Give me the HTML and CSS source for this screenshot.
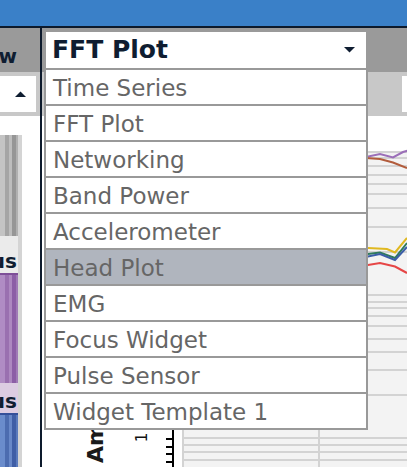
FILE: index.html
```html
<!DOCTYPE html>
<html>
<head>
<meta charset="utf-8">
<link rel="stylesheet" href="styles.css">
</head>
<body>
<div class="topbar"></div>
<div class="topline"></div>
<div class="main">
  <div class="leftcol">
    <div class="lhead"><span>Overview</span></div>
    <div class="lsub">
      <div class="lbox">
        <svg class="arrow" width="11" height="6" viewBox="0 0 11 6"><polygon points="0,6 5.5,0.5 11,6"/></svg>
      </div>
    </div>
    <div class="lbody">
      <div class="bars">
        <div class="seg seg-grey"></div>
        <div class="seglabel lab-grey"><span>Focus</span></div>
        <div class="seg seg-purple"></div>
        <div class="seglabel lab-purple"><span>Focus</span></div>
        <div class="seg seg-blue"></div>
      </div>
    </div>
  </div>
  <div class="divider"></div>
  <div class="widget">
    <div class="whead"></div>
    <div class="wsub"><div class="wbox"></div></div>
    <div class="wbody">
      <svg class="plot" width="365" height="351" viewBox="0 0 365 351">
        <rect x="140" y="35" width="225" height="316" fill="#f3f3f3"/>
        <path d="M140 36H365M140 42H365M140 50H365M140 59H365M140 68H365M140 78H365M140 92H365M140 111H365M140 136H365M140 179H365M140 186H365M140 192H365M140 200H365M140 210H365M140 223H365M140 236H365M140 254H365M140 279H365M140 322H365M140 329H365M140 336H365M140 344H365" stroke="#d3d3d3" stroke-width="2" fill="none"/>
        <path d="M141 35V351M277 35V351" stroke="#d3d3d3" stroke-width="2" fill="none"/>
        <path d="M131 35V351" stroke="#000" stroke-width="2" fill="none"/>
        <path d="M124 323H131M124 331H131M124 338H131M124 346H131" stroke="#000" stroke-width="2" fill="none"/>
        <text class="tick" x="105" y="321.5" transform="rotate(-90 105 321.5)" text-anchor="middle">1</text>
        <text class="axlabel" x="61" y="347" transform="rotate(-90 61 347)">Amplitude (uV)</text>
        <polyline points="318,41 324,41 338,38 351,41.5 361,36 368,34" stroke="#9b6fb8" stroke-width="2" fill="none"/>
        <polyline points="318,42 324,42 338,43 351,46.5 365,52" stroke="#b25c3c" stroke-width="2" fill="none"/>
        <polyline points="318,132 326,132 345,133 353,136.5 365,122" stroke="#e0b820" stroke-width="2" fill="none"/>
        <polyline points="318,138 326,138 338,136.5 353,142 365,127" stroke="#2f7a5c" stroke-width="2" fill="none"/>
        <polyline points="318,140.5 326,140.5 338,138 353,144 365,131" stroke="#3c5ea8" stroke-width="2" fill="none"/>
        <polyline points="318,149 326,149 338,147 353,150.5 365,157" stroke="#e64646" stroke-width="2" fill="none"/>
      </svg>
    </div>
    <div class="dropdown">
      <div class="ddhead">
        <span>FFT Plot</span>
        <svg class="arrow" width="11" height="6" viewBox="0 0 11 6"><polygon points="0,0 11,0 5.5,5.5"/></svg>
      </div>
      <ul class="ddlist">
        <li>Time Series</li>
        <li>FFT Plot</li>
        <li>Networking</li>
        <li>Band Power</li>
        <li>Accelerometer</li>
        <li class="sel">Head Plot</li>
        <li>EMG</li>
        <li>Focus Widget</li>
        <li>Pulse Sensor</li>
        <li>Widget Template 1</li>
      </ul>
    </div>
  </div>
</div>
</body>
</html>
```

FILE: styles.css
```css
html, body {
  margin: 0;
  padding: 0;
}
body {
  width: 407px;
  height: 467px;
  overflow: hidden;
  background: #fff;
  font-family: "DejaVu Sans", "Noto Sans", sans-serif;
}
.topbar {
  height: 26px;
  background: #3a80c8;
}
.topline {
  height: 2px;
  background: #0d1a2c;
}
.main {
  display: flex;
  height: 439px;
}

/* left widget */
.leftcol {
  width: 40px;
  display: flex;
  flex-direction: column;
  flex-shrink: 0;
}
.lhead {
  height: 44px;
  box-sizing: border-box;
  background: #9a9a9a;
  display: flex;
  justify-content: flex-end;
  align-items: flex-start;
  padding: 18px 23px 0 0;
  font-weight: bold;
  font-size: 20px;
  line-height: 20px;
  color: #0f1d31;
  white-space: nowrap;
}
.lhead span,
.seglabel span {
  flex-shrink: 0;
}
.lsub {
  height: 44px;
  box-sizing: border-box;
  background: #c8c8c8;
  padding: 4px 4px 4px 0;
}
.lbox {
  height: 36px;
  background: #fff;
  display: flex;
  justify-content: flex-end;
  align-items: center;
  padding-right: 10px;
}
.arrow {
  display: block;
  fill: #0f1d31;
}
.lbody {
  flex: 1;
  background: #fff;
  padding-top: 19px;
}
.bars {
  width: 18px;
  height: 100%;
  border-right: 4px solid #d4d4d4;
  display: flex;
  flex-direction: column;
}
.seg-grey {
  height: 101px;
  background: linear-gradient(90deg, #c4c4c4 0 5px, #a5a5a5 5px 9px, #bdbdbd 9px 12px, #969696 12px 16px, #b0b0b0 16px 18px);
}
.seglabel {
  display: flex;
  justify-content: flex-end;
  align-items: flex-end;
  padding: 0 1px 2px 0;
  box-sizing: border-box;
  font-weight: bold;
  font-size: 20px;
  line-height: 20px;
  color: #0f1d31;
  white-space: nowrap;
}
.lab-grey {
  height: 37px;
  background: #ebebeb;
}
.seg-purple {
  height: 110px;
  box-sizing: border-box;
  border-top: 2px solid #7e4f98;
  background: linear-gradient(90deg, #b08cc4 0 5px, #9a70b0 5px 9px, #ad88c0 9px 12px, #8c5ea6 12px 16px, #a07ab6 16px 18px);
}
.lab-purple {
  height: 30px;
  background: #dccce2;
}
.seg-blue {
  flex: 1;
  border-top: 2px solid #34509a;
  background: linear-gradient(90deg, #6a8ccc 0 5px, #4c6cb0 5px 9px, #6888c8 9px 12px, #3f5ea6 12px 16px, #5a7abc 16px 18px);
}

.divider {
  width: 2px;
  flex-shrink: 0;
  background: #0d1a2c;
}

/* main widget */
.widget {
  flex: 1;
  position: relative;
  display: flex;
  flex-direction: column;
}
.whead {
  height: 44px;
  background: #9a9a9a;
}
.wsub {
  height: 44px;
  box-sizing: border-box;
  background: #c8c8c8;
  padding: 4px 0;
  display: flex;
  justify-content: flex-end;
}
.wbox {
  width: 5px;
  background: #fff;
}
.wbody {
  flex: 1;
  background: #fff;
}
.plot {
  display: block;
}
.tick {
  font-family: "DejaVu Sans", sans-serif;
  font-size: 15px;
  fill: #111;
}
.axlabel {
  font-family: "DejaVu Sans", sans-serif;
  font-weight: bold;
  font-size: 22px;
  fill: #1a1a1a;
}

/* dropdown menu */
.dropdown {
  position: absolute;
  left: 2px;
  top: 4px;
  width: 324px;
}
.ddhead {
  margin: 0 2px;
  height: 36px;
  background: #fff;
  display: flex;
  align-items: center;
  justify-content: space-between;
  padding: 0 11px 0 6px;
  font-weight: bold;
  font-size: 25px;
  line-height: 36px;
  color: #0f1d31;
}
.ddlist {
  list-style: none;
  margin: 0;
  padding: 0;
  border: 2px solid #999;
  border-bottom: 0;
  background: #fff;
}
.ddlist li {
  height: 33px;
  box-sizing: content-box;
  border-bottom: 2px solid #999;
  padding: 1px 0 0 7px;
  font-size: 23px;
  line-height: 35px;
  color: #666;
  white-space: nowrap;
}
.ddlist li.sel {
  background: #b0b5be;
}
```
